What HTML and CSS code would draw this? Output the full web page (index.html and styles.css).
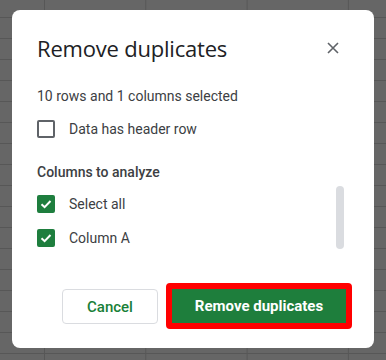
FILE: index.html
```html
<!DOCTYPE html>
<html lang="en">
<head>
    <meta charset="UTF-8">
    <meta name="viewport" content="width=device-width, initial-scale=1.0">
    <title>Remove duplicates</title>
    <link rel="stylesheet" href="styles.css">
</head>
<body>

<div class="dialog">
    <div class="dialog-head">
        <h1 class="dialog-title">Remove duplicates</h1>
        <button class="close-btn" aria-label="Close">
            <svg width="12" height="12" viewBox="0 0 12 12">
                <path d="M1 1 L11 11 M11 1 L1 11" stroke="#5f6368" stroke-width="1.6" fill="none"/>
            </svg>
        </button>
    </div>

    <p class="selection-info">10 rows and 1 columns selected</p>

    <label class="check-row">
        <span class="box"></span>
        <span>Data has header row</span>
    </label>

    <h2 class="section-title">Columns to analyze</h2>

    <div class="column-list">
        <div class="column-items">
            <label class="check-row">
                <span class="box checked">
                    <svg width="14" height="14" viewBox="0 0 14 14">
                        <path d="M2.5 7.2 L5.6 10.2 L11.5 4" stroke="#fff" stroke-width="2" fill="none"/>
                    </svg>
                </span>
                <span>Select all</span>
            </label>
            <label class="check-row">
                <span class="box checked">
                    <svg width="14" height="14" viewBox="0 0 14 14">
                        <path d="M2.5 7.2 L5.6 10.2 L11.5 4" stroke="#fff" stroke-width="2" fill="none"/>
                    </svg>
                </span>
                <span>Column A</span>
            </label>
        </div>
        <div class="scrollbar"></div>
    </div>

    <div class="dialog-footer">
        <button class="btn-cancel">Cancel</button>
        <span class="highlight">
            <button class="btn-primary">Remove duplicates</button>
        </span>
    </div>
</div>

</body>
</html>
```

FILE: styles.css
```css
body {
    margin: 0;
    height: 360px;
    padding: 10px 12px 0;
    box-sizing: border-box;
    font-family: Roboto, "Liberation Sans", sans-serif;
    background-color: #666666; /* dimmed sheet behind the dialog */
    background-image:
        linear-gradient(#575757 1px, transparent 1px),
        linear-gradient(90deg, #575757 1px, transparent 1px);
    background-size: 21px 21px, 101.3px 101.3px;
    background-position: 0 17px, 44px 0;
}
.dialog {
    width: 362px;
    height: 338px;
    box-sizing: border-box;
    background: #ffffff;
    border-radius: 8px;
    padding: 24px 22px 0 25px;
    display: flex;
    flex-direction: column;
    color: #3c4043;
}
.dialog-head {
    display: flex;
    align-items: center;
    justify-content: space-between;
    height: 28px;
}
.dialog-title {
    margin: 0;
    font-family: "Open Sans", Roboto, sans-serif;
    font-size: 22px;
    font-weight: 400;
    line-height: 28px;
    color: #202124;
    letter-spacing: -0.2px;
}
.close-btn {
    border: none;
    background: none;
    padding: 0;
    margin-right: 13px;
    width: 12px;
    height: 12px;
    display: flex;
}
.selection-info {
    margin: 24px 0 0;
    font-size: 14px;
    line-height: 20px;
    color: #3c4043;
}
.check-row {
    display: flex;
    align-items: center;
    gap: 14px;
    height: 18px;
    font-size: 14px;
    color: #3c4043;
    margin-top: 14px;
}
.box {
    width: 18px;
    height: 18px;
    box-sizing: border-box;
    border: 2px solid #5f6368;
    border-radius: 2px;
    display: flex;
    align-items: center;
    justify-content: center;
}
.box.checked {
    background: #1e7e3e;
    border-color: #1e7e3e;
}
.section-title {
    margin: 24px 0 0;
    font-size: 14px;
    font-weight: 500;
    line-height: 20px;
    color: #3c4043;
}
.column-list {
    display: flex;
    justify-content: space-between;
    height: 63px;
    margin-top: 4px;
    overflow: hidden;
}
.column-items {
    display: flex;
    flex-direction: column;
    gap: 16px;
    padding-top: 9px;
}
.column-items .check-row {
    margin-top: 0;
}
.scrollbar {
    width: 8px;
    height: 63px;
    margin-right: 8px;
    background: #dadce0;
    border-radius: 4px;
}
.dialog-footer {
    display: flex;
    justify-content: flex-end;
    align-items: center;
    gap: 8px;
    margin-top: 34px;
}
.btn-cancel {
    width: 96px;
    height: 35px;
    background: #ffffff;
    border: 1px solid #dadce0;
    border-radius: 4px;
    color: #188038;
    font-family: Roboto, sans-serif;
    font-size: 15px;
    font-weight: 500;
    margin-top: 1px;
}
.highlight {
    display: flex;
    border: 6px solid #ff0000;
    border-radius: 4px;
}
.btn-primary {
    width: 174px;
    height: 34px;
    border: none;
    background: #1e7e3c;
    color: #ffffff;
    font-family: Roboto, sans-serif;
    font-size: 15px;
    font-weight: 700;
}
```
